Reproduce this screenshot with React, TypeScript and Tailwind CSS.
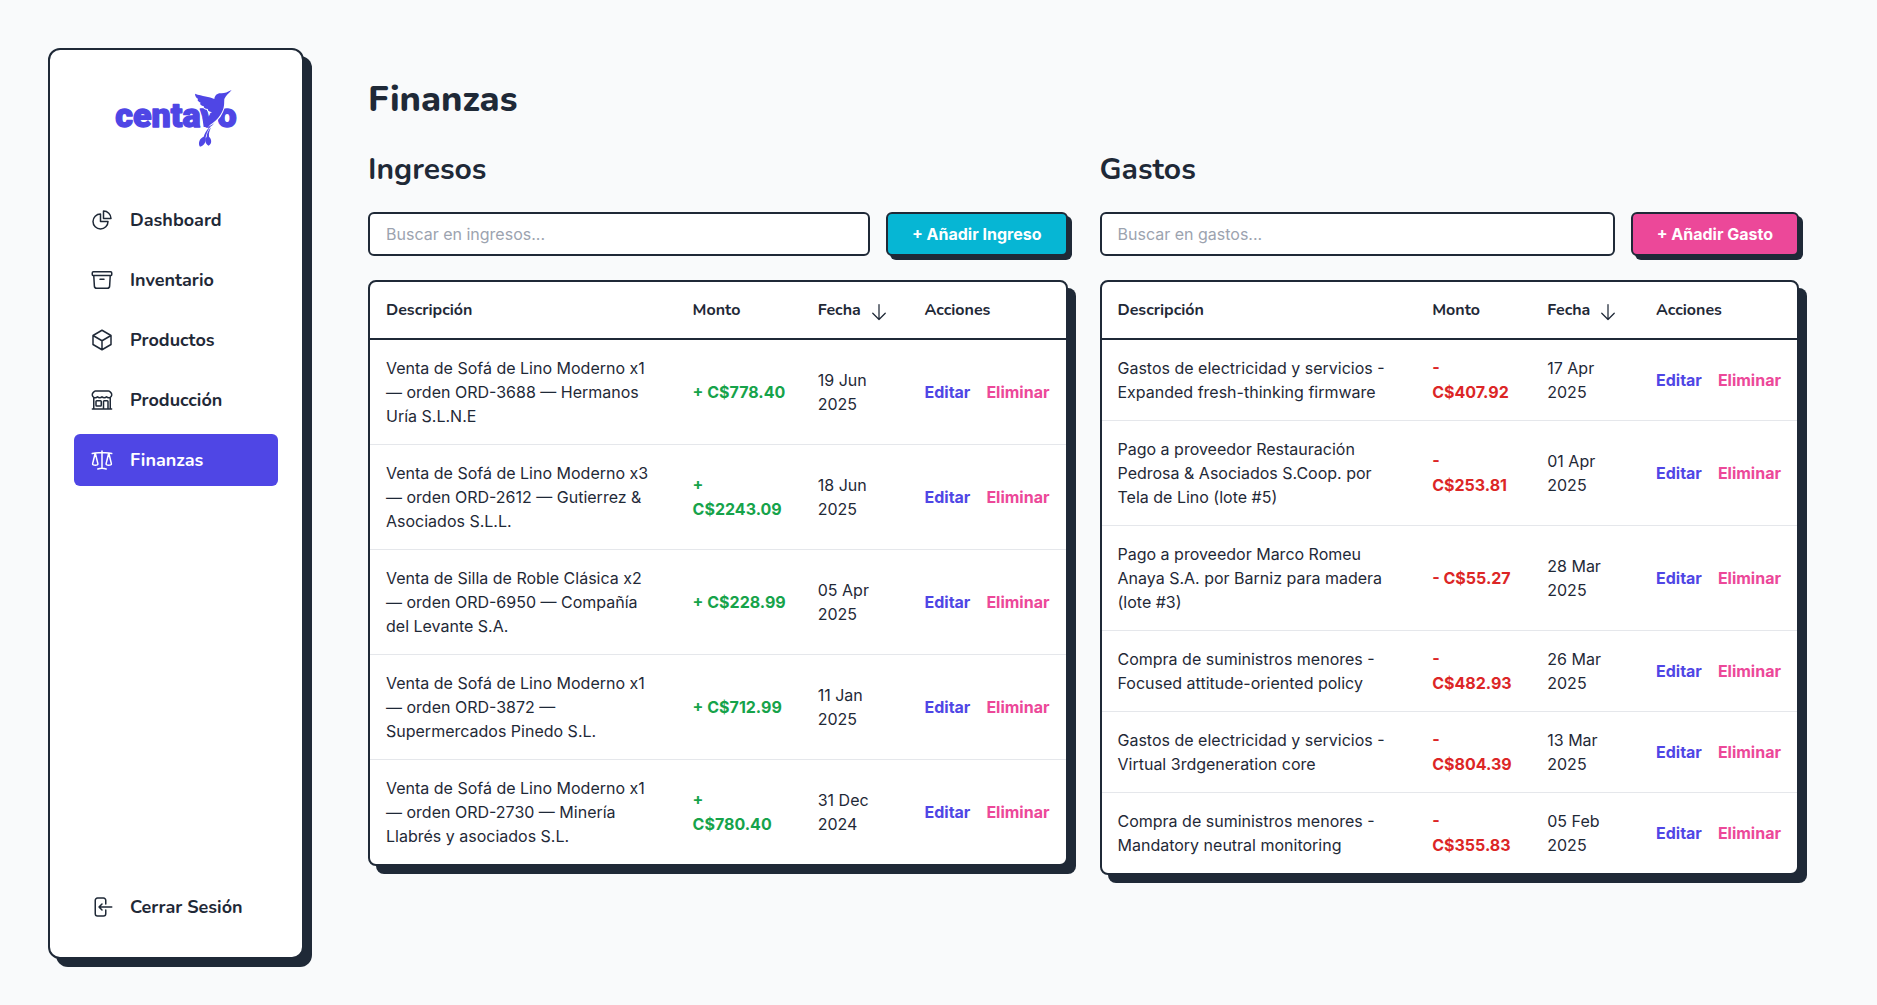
import React from 'react';
import {
  HiOutlineChartPie,
  HiOutlineArchiveBox,
  HiOutlineCube,
  HiOutlineBuildingStorefront,
  HiOutlineScale,
  HiOutlineArrowDown,
} from 'react-icons/hi2';

type Row = { text: string; amount: string; date: string };

const incomes: Row[] = [
  { text: 'Venta de Sofá de Lino Moderno x1 — orden ORD-3688 — Hermanos Uría S.L.N.E', amount: '+ C$778.40', date: '19 Jun 2025' },
  { text: 'Venta de Sofá de Lino Moderno x3 — orden ORD-2612 — Gutierrez & Asociados S.L.L.', amount: '+ C$2243.09', date: '18 Jun 2025' },
  { text: 'Venta de Silla de Roble Clásica x2 — orden ORD-6950 — Compañía del Levante S.A.', amount: '+ C$228.99', date: '05 Apr 2025' },
  { text: 'Venta de Sofá de Lino Moderno x1 — orden ORD-3872 — Supermercados Pinedo S.L.', amount: '+ C$712.99', date: '11 Jan 2025' },
  { text: 'Venta de Sofá de Lino Moderno x1 — orden ORD-2730 — Minería Llabrés y asociados S.L.', amount: '+ C$780.40', date: '31 Dec 2024' },
];

const expenses: Row[] = [
  { text: 'Gastos de electricidad y servicios - Expanded fresh-thinking firmware', amount: '- C$407.92', date: '17 Apr 2025' },
  { text: 'Pago a proveedor Restauración Pedrosa & Asociados S.Coop. por Tela de Lino (lote #5)', amount: '- C$253.81', date: '01 Apr 2025' },
  { text: 'Pago a proveedor Marco Romeu Anaya S.A. por Barniz para madera (lote #3)', amount: '- C$55.27', date: '28 Mar 2025' },
  { text: 'Compra de suministros menores - Focused attitude-oriented policy', amount: '- C$482.93', date: '26 Mar 2025' },
  { text: 'Gastos de electricidad y servicios - Virtual 3rdgeneration core', amount: '- C$804.39', date: '13 Mar 2025' },
  { text: 'Compra de suministros menores - Mandatory neutral monitoring', amount: '- C$355.83', date: '05 Feb 2025' },
];

const nav = [
  { label: 'Dashboard', Icon: HiOutlineChartPie },
  { label: 'Inventario', Icon: HiOutlineArchiveBox },
  { label: 'Productos', Icon: HiOutlineCube },
  { label: 'Producción', Icon: HiOutlineBuildingStorefront },
  { label: 'Finanzas', Icon: HiOutlineScale, active: true },
];

function Logo() {
  return (
    <svg viewBox="0 0 450 225" className="h-[75px] w-[150px] text-[#4f46e5]" fill="currentColor" role="img" aria-label="centavo">
      <text x="43" y="141" fontSize="102" fontWeight="900" stroke="currentColor" strokeWidth="4" strokeLinejoin="round" className="font-['Roboto',sans-serif]">
        centavo
      </text>
      <path d="M366 86 C360 108 346 128 326 142 L332 152 L348 146 C348 124 352 104 370 88Z" fill="#fff" />
      <g stroke="#fff" strokeWidth="6" strokeLinejoin="round" paintOrder="stroke">
        <path d="M392 30 C380 36 371 40 362 40 C350 38 341 45 340 57 C325 49 304 49 282 41 C282 49 286 54 292 57 C288 59 289 64 299 68 C295 72 300 77 308 78 C307 84 313 87 321 87 C319 92 326 96 333 96 C333 112 328 126 320 138 C338 130 356 113 364 94 C371 80 369 68 370 57 C374 48 383 40 392 30Z" />
      </g>
      <path d="M304 112 L322 112 L332 96 L345 112 L322 141 L308 141Z" />
      <path d="M328 140 C316 149 311 160 308 170 C296 174 290 190 297 200 C309 198 317 184 314 172 C316 160 320 152 328 140Z" />
      <path d="M330 142 C321 152 318 160 317 170 C310 179 313 192 323 197 C334 190 332 177 324 170 C323 160 325 154 330 142Z" />
    </svg>
  );
}

function LogoutIcon() {
  return (
    <svg viewBox="0 0 24 24" className="size-6" fill="none" stroke="currentColor" strokeWidth="1.5" strokeLinecap="round" strokeLinejoin="round" aria-hidden="true">
      <path d="M15.75 9V5.25A2.25 2.25 0 0 0 13.5 3h-6a2.25 2.25 0 0 0-2.25 2.25v13.5A2.25 2.25 0 0 0 7.5 21h6a2.25 2.25 0 0 0 2.25-2.25V15M12 9l-3 3m0 0 3 3m-3-3h12.75" />
    </svg>
  );
}

function Sidebar() {
  return (
    <aside className="flex w-64 shrink-0 flex-col rounded-xl border-2 border-[#1f2937] bg-white p-6 shadow-[8px_8px_0_0_#1f2937]">
      <div className="mb-[39px] flex justify-center pt-[6px]">
        <Logo />
      </div>
      <nav className="flex flex-col gap-2 font-['Nunito','Lato',sans-serif] text-lg font-bold">
        {nav.map(({ label, Icon, active }) => (
          <a
            key={label}
            href="#"
            aria-current={active ? 'page' : undefined}
            className={active ? 'flex items-center gap-4 rounded-md bg-[#4f46e5] px-4 py-3 text-white' : 'flex items-center gap-4 rounded-md px-4 py-3'}
          >
            <Icon className="size-6" />
            {label}
          </a>
        ))}
      </nav>
      <button type="button" className="mt-auto flex items-center gap-4 rounded-md px-4 py-3 font-['Nunito','Lato',sans-serif] text-lg font-bold">
        <LogoutIcon />
        Cerrar Sesión
      </button>
    </aside>
  );
}

type PanelProps = {
  title: string;
  placeholder: string;
  action: string;
  actionClass: string;
  amountClass: string;
  rows: Row[];
};

function Panel({ title, placeholder, action, actionClass, amountClass, rows }: PanelProps) {
  return (
    <section className="min-w-0">
      <h2 className="mb-6 font-['Nunito','Lato',sans-serif] text-3xl font-bold">{title}</h2>
      <div className="mb-6 flex gap-4">
        <input
          type="search"
          aria-label={placeholder}
          placeholder={placeholder}
          className="h-11 min-w-0 flex-1 rounded-md border-2 border-[#1f2937] bg-white px-4 placeholder:text-[#9ca3af]"
        />
        <button type="button" className={`h-11 rounded-md border-2 border-[#1f2937] px-6 font-bold text-white shadow-[4px_4px_0_0_#1f2937] ${actionClass}`}>
          {action}
        </button>
      </div>
      <div className="overflow-hidden rounded-lg border-2 border-[#1f2937] bg-white shadow-[8px_8px_0_0_#1f2937]">
        <table className="w-full text-left">
          <thead className="border-b-2 border-[#1f2937] font-['Nunito','Lato',sans-serif]">
            <tr className="h-[57px]">
              <th scope="col" className="px-4 font-bold">Descripción</th>
              <th scope="col" className="px-4 font-bold">Monto</th>
              <th scope="col" className="pr-3 pl-4 font-bold">
                <button type="button" className="flex items-center gap-2">
                  Fecha
                  <HiOutlineArrowDown className="mt-1 size-5 shrink-0" />
                </button>
              </th>
              <th scope="col" className="px-4 font-bold">Acciones</th>
            </tr>
          </thead>
          <tbody className="divide-y divide-[#e5e7eb]">
            {rows.map((r) => (
              <tr key={r.text}>
                <td className="p-4">{r.text}</td>
                <td className={`p-4 font-bold ${amountClass}`}>{r.amount}</td>
                <td className="p-4">{r.date}</td>
                <td className="p-4">
                  <div className="flex gap-4 font-bold">
                    <button type="button" className="text-[#4f46e5]">Editar</button>
                    <button type="button" className="text-[#ec4899]">Eliminar</button>
                  </div>
                </td>
              </tr>
            ))}
          </tbody>
        </table>
      </div>
    </section>
  );
}

export default function App() {
  return (
    <div className="flex min-h-screen bg-[#f9fafb] pt-12 pr-[46px] pb-[46px] pl-12 font-['Inter',sans-serif] text-base text-[#1f2937]">
      <Sidebar />
      <main className="ml-8 min-w-0 flex-1 p-8">
        <h1 className="mb-8 font-['Nunito','Lato',sans-serif] text-4xl font-extrabold">Finanzas</h1>
        <div className="grid grid-cols-2 items-start gap-8">
          <Panel
            title="Ingresos"
            placeholder="Buscar en ingresos..."
            action="+ Añadir Ingreso"
            actionClass="bg-[#06b6d4]"
            amountClass="text-[#16a34a]"
            rows={incomes}
          />
          <Panel
            title="Gastos"
            placeholder="Buscar en gastos..."
            action="+ Añadir Gasto"
            actionClass="bg-[#ec4899]"
            amountClass="text-[#dc2626]"
            rows={expenses}
          />
        </div>
      </main>
    </div>
  );
}
